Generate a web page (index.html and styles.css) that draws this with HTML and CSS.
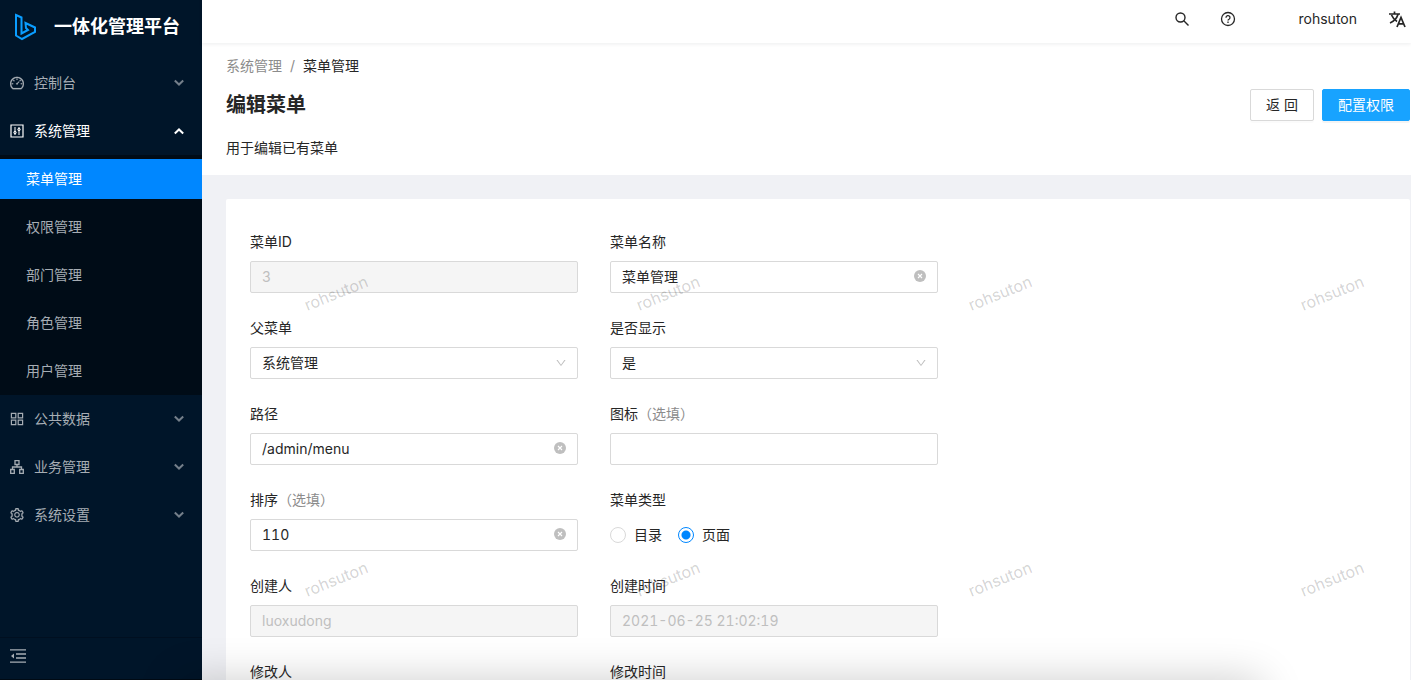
FILE: index.html
```html
<!DOCTYPE html>
<html lang="zh-CN">
<head>
<meta charset="utf-8">
<title>编辑菜单 - 一体化管理平台</title>
<link rel="stylesheet" href="styles.css">
</head>
<body>
<svg class="sprite" aria-hidden="true">
  <symbol id="down" viewBox="0 0 12 12"><path d="M1.800 3.500 6 7.500l4.200-4" fill="none" stroke="currentColor" stroke-width="2"/></symbol>
  <symbol id="select-down" viewBox="0 0 1024 1024"><path fill="currentColor" d="M884 256h-75c-5.100 0-9.900 2.500-12.900 6.600L512 654.200 227.900 262.600c-3-4.100-7.800-6.600-12.900-6.600h-75c-6.500 0-10.300 7.400-6.500 12.700l352.600 486.100c12.800 17.600 39 17.600 51.700 0l352.600-486.100c3.900-5.300.1-12.700-6.400-12.700z"/></symbol>
  <symbol id="clear" viewBox="0 0 12 12"><circle cx="6" cy="6" r="6" fill="currentColor"/><path d="M4 4l4 4M8 4 4 8" stroke="#fff" stroke-width="1.100"/></symbol>
</svg>
<div class="shell">
  <aside class="sidebar">
    <a class="brand" href="#">
      <svg class="brand-logo" viewBox="0 0 24 28" fill="none" stroke="#0a9dff" stroke-width="2"><path d="M2 2 7.500 4.500V20.500L14 17 12 15 11.500 10 21 14.500V19L8 26 2 22.500Z"/></svg>
      <span>一体化管理平台</span>
    </a>
    <nav class="menu">
      <a class="menu-item" href="#">
        <svg class="menu-icon" viewBox="64 64 896 896" fill="currentColor" stroke="currentColor" stroke-width="12"><path d="M924.800 385.600a446.700 446.700 0 00-96-142.400 446.700 446.700 0 00-142.400-96C631.100 123.800 572.500 112 512 112s-119.100 11.800-174.400 35.200a446.700 446.700 0 00-142.400 96 446.700 446.700 0 00-96 142.400C75.800 440.900 64 499.500 64 560c0 132.700 58.300 257.700 159.900 343.100l1.700 1.400c5.800 4.800 13.100 7.500 20.600 7.500h531.700c7.500 0 14.800-2.700 20.600-7.500l1.700-1.400C901.700 817.700 960 692.700 960 560c0-60.500-11.900-119.100-35.200-174.400zM761.400 836H262.600A371.120 371.120 0 01140 560c0-99.400 38.700-192.800 109-263 70.300-70.300 163.700-109 263-109 99.400 0 192.800 38.700 263 109 70.300 70.300 109 163.700 109 263 0 105.600-44.500 205.500-122.600 276zM623.500 421.500a8.030 8.030 0 00-11.300 0L527.700 506c-18.700-5-39.400-.2-54.100 14.500a55.950 55.950 0 000 79.200 55.950 55.950 0 0079.200 0 55.870 55.870 0 0014.500-54.100l84.500-84.500c3.100-3.100 3.100-8.200 0-11.300l-28.300-28.300zM490 320h44c4.400 0 8-3.600 8-8v-80c0-4.400-3.600-8-8-8h-44c-4.400 0-8 3.600-8 8v80c0 4.400 3.600 8 8 8zm260 218v44c0 4.400 3.600 8 8 8h80c4.400 0 8-3.600 8-8v-44c0-4.400-3.600-8-8-8h-80c-4.400 0-8 3.600-8 8zm12.700-197.200l-31.100-31.100a8.030 8.030 0 00-11.300 0l-56.600 56.600a8.030 8.030 0 000 11.300l31.100 31.100c3.100 3.100 8.200 3.100 11.300 0l56.600-56.600c3.100-3.100 3.100-8.200 0-11.300zm-458.600-31.100a8.030 8.030 0 00-11.300 0l-31.100 31.100a8.030 8.030 0 000 11.300l56.600 56.600c3.100 3.100 8.200 3.100 11.300 0l31.100-31.100c3.100-3.100 3.100-8.200 0-11.300l-56.600-56.600zM262 530h-80c-4.400 0-8 3.600-8 8v44c0 4.400 3.600 8 8 8h80c4.400 0 8-3.600 8-8v-44c0-4.400-3.600-8-8-8z"/></svg>
        <span>控制台</span><svg class="menu-arrow"><use href="#down"/></svg>
      </a>
      <a class="menu-item is-open" href="#">
        <svg class="menu-icon" viewBox="0 0 14 14" fill="none" stroke="currentColor"><path d="M1 1h12v12H1z" stroke-width="1.200"/><path d="M5 3v8M9 3v8"/><circle cx="5" cy="8.500" r="1.200"/><circle cx="9" cy="5.500" r="1.200"/></svg>
        <span>系统管理</span><svg class="menu-arrow"><use href="#down"/></svg>
      </a>
      <div class="submenu">
        <a class="submenu-item is-active" href="#">菜单管理</a>
        <a class="submenu-item" href="#">权限管理</a>
        <a class="submenu-item" href="#">部门管理</a>
        <a class="submenu-item" href="#">角色管理</a>
        <a class="submenu-item" href="#">用户管理</a>
      </div>
      <a class="menu-item" href="#">
        <svg class="menu-icon" viewBox="0 0 14 14" fill="none" stroke="currentColor" stroke-width="1.200"><path d="M1.400 1.400h4.400v4.400H1.400zM8.200 1.400h4.400v4.400H8.200zM1.400 8.200h4.400v4.400H1.400zM8.200 8.200h4.400v4.400H8.200z"/></svg>
        <span>公共数据</span><svg class="menu-arrow"><use href="#down"/></svg>
      </a>
      <a class="menu-item" href="#">
        <svg class="menu-icon" viewBox="0 0 14 14" fill="none" stroke="currentColor" stroke-width="1.300"><path d="M5 .7h4v3.800H5zM.7 9.500h3.600v3.800H.7zM9.700 9.500h3.600v3.800H9.700zM7 4.500V7M2.500 9.500V7h9v2.500"/></svg>
        <span>业务管理</span><svg class="menu-arrow"><use href="#down"/></svg>
      </a>
      <a class="menu-item" href="#">
        <svg class="menu-icon" viewBox="64 64 896 896" fill="currentColor" stroke="currentColor" stroke-width="12"><path d="M924.800 625.700l-65.500-56c3.100-19 4.700-38.400 4.700-57.800s-1.600-38.800-4.700-57.800l65.500-56a32.030 32.030 0 009.300-35.200l-.9-2.600a443.740 443.740 0 00-79.700-137.900l-1.800-2.100a32.120 32.120 0 00-35.100-9.500l-81.300 28.900c-30-24.600-63.500-44-99.700-57.600l-15.700-85a32.050 32.050 0 00-25.800-25.700l-2.700-.5c-52.100-9.400-106.900-9.400-159 0l-2.700.5a32.050 32.050 0 00-25.800 25.700l-15.800 85.400a351.860 351.860 0 00-99 57.400l-81.900-29.100a32 32 0 00-35.100 9.500l-1.800 2.100a446.020 446.020 0 00-79.700 137.900l-.9 2.600c-4.500 12.500-.8 26.500 9.300 35.200l66.300 56.600c-3.100 18.800-4.600 38-4.600 57.100 0 19.200 1.500 38.400 4.600 57.100L99 625.500a32.030 32.030 0 00-9.300 35.200l.9 2.600c18.100 50.400 44.900 96.900 79.700 137.900l1.800 2.100a32.120 32.120 0 0035.100 9.500l81.900-29.100c29.800 24.500 63.100 43.900 99 57.400l15.800 85.400a32.050 32.050 0 0025.800 25.700l2.700.5a449.400 449.400 0 00159 0l2.700-.5a32.050 32.050 0 0025.800-25.700l15.700-85a350 350 0 0099.700-57.600l81.300 28.900a32 32 0 0035.100-9.500l1.800-2.100c34.800-41.100 61.600-87.500 79.700-137.900l.9-2.600c4.500-12.300.8-26.300-9.300-35zM788.300 465.900c2.500 15.100 3.800 30.600 3.800 46.100s-1.300 31-3.800 46.100l-6.600 40.100 74.700 63.900a370.030 370.030 0 01-42.600 73.600L721 702.800l-31.400 25.800c-23.900 19.600-50.500 35-79.300 45.800l-38.100 14.300-17.900 97a377.500 377.500 0 01-85 0l-17.900-97.200-37.800-14.500c-28.500-10.800-55-26.200-78.700-45.700l-31.400-25.900-93.400 33.200c-17-22.900-31.200-47.600-42.600-73.600l75.500-64.500-6.500-40c-2.400-14.900-3.700-30.300-3.700-45.500 0-15.300 1.200-30.600 3.700-45.500l6.500-40-75.500-64.500c11.300-26.100 25.600-50.700 42.600-73.600l93.400 33.200 31.400-25.900c23.700-19.500 50.200-34.900 78.700-45.700l37.900-14.300 17.900-97.200c28.100-3.200 56.800-3.200 85 0l17.900 97 38.100 14.300c28.700 10.800 55.400 26.200 79.300 45.800l31.400 25.800 92.800-32.900c17 22.900 31.200 47.600 42.600 73.600L781.800 426l6.500 39.900zM512 326c-97.200 0-176 78.800-176 176s78.800 176 176 176 176-78.800 176-176-78.800-176-176-176zm79.200 255.200A111.600 111.600 0 01512 614c-29.900 0-58-11.700-79.200-32.800A111.600 111.600 0 01400 502c0-29.900 11.700-58 32.800-79.200C454 401.600 482.100 390 512 390c29.900 0 58 11.600 79.200 32.800A111.600 111.600 0 01624 502c0 29.900-11.700 58-32.800 79.200z"/></svg>
        <span>系统设置</span><svg class="menu-arrow"><use href="#down"/></svg>
      </a>
    </nav>
    <button class="collapse" type="button" aria-label="收起菜单">
      <svg viewBox="0 0 16 16" fill="none" stroke="currentColor" stroke-width="1.300"><path d="M0 1.800h16M6 6h10M6 10h10M0 14.200h16"/><path d="M1 8l3-2.500v5z" fill="currentColor" stroke="none"/></svg>
    </button>
  </aside>

  <div class="main">
    <header class="topbar">
      <button class="top-action" type="button" aria-label="搜索"><svg viewBox="0 0 16 16" fill="none" stroke="currentColor" stroke-width="1.400"><circle cx="6.500" cy="6.500" r="4.500"/><path d="M9.800 9.800 14.500 14.500"/></svg></button>
      <a class="top-action" href="#" aria-label="帮助"><svg viewBox="0 0 16 16" fill="none" stroke="currentColor" stroke-width="1.300"><circle cx="8" cy="8" r="6.500"/><path d="M6 6.700a2 2 0 1 1 3 1.600q-1 .5-1 1.300"/><path d="M8 10.600v1.300"/></svg></a>
      <a class="user" href="#">rohsuton</a>
      <button class="lang" type="button" aria-label="语言"><svg viewBox="0 0 18 18" fill="none" stroke="currentColor" stroke-width="1.700"><path d="M1 4h11M6.500 1.500V4M10 4.500Q8 10.500 2 13M3.500 5Q5.500 9.500 9 11.500"/><path d="M9 17 13 7.500 17 17M10.500 13.800h5"/></svg></button>
    </header>

    <div class="page">
      <section class="page-header">
        <nav class="crumbs"><a href="#">系统管理</a><span class="slash">/</span><span class="current">菜单管理</span></nav>
        <div class="heading">
          <h1>编辑菜单</h1>
          <div class="actions"><button class="btn" type="button">返 回</button><button class="btn btn-primary" type="button">配置权限</button></div>
        </div>
        <p class="desc">用于编辑已有菜单</p>
      </section>

      <div class="content">
        <form class="card">
          <div class="field"><label for="id">菜单ID</label><input class="control" id="id" value="3" disabled></div>
          <div class="field"><label for="name">菜单名称</label><div class="control-wrap"><input class="control" id="name" value="菜单管理"><button class="clear" type="button" aria-label="清除"><svg><use href="#clear"/></svg></button></div></div>
          <div class="field"><label for="parent">父菜单</label><div class="control-wrap"><select class="control" id="parent"><option>系统管理</option></select><svg class="select-arrow"><use href="#select-down"/></svg></div></div>
          <div class="field"><label for="show">是否显示</label><div class="control-wrap"><select class="control" id="show"><option>是</option></select><svg class="select-arrow"><use href="#select-down"/></svg></div></div>
          <div class="field"><label for="path">路径</label><div class="control-wrap"><input class="control" id="path" value="/admin/menu"><button class="clear" type="button" aria-label="清除"><svg><use href="#clear"/></svg></button></div></div>
          <div class="field"><label for="icon">图标<span class="optional">（选填）</span></label><input class="control" id="icon"></div>
          <div class="field"><label for="sort">排序<span class="optional">（选填）</span></label><div class="control-wrap"><input class="control tabular" id="sort" value="110"><button class="clear" type="button" aria-label="清除"><svg><use href="#clear"/></svg></button></div></div>
          <fieldset class="field"><legend>菜单类型</legend>
            <div class="radios"><label><input type="radio" name="type"><span>目录</span></label><label><input type="radio" name="type" checked><span>页面</span></label></div>
          </fieldset>
          <div class="field"><label for="creator">创建人</label><input class="control" id="creator" value="luoxudong" disabled></div>
          <div class="field"><label for="created">创建时间</label><input class="control tabular" id="created" value="2021-06-25 21:02:19" disabled></div>
          <div class="field"><label for="editor">修改人</label><input class="control" id="editor" disabled></div>
          <div class="field"><label for="edited">修改时间</label><input class="control" id="edited" disabled></div>
        </form>
        <div class="watermark" aria-hidden="true"><span>rohsuton</span><span>rohsuton</span><span>rohsuton</span><span>rohsuton</span><span>rohsuton</span><span>rohsuton</span><span>rohsuton</span><span>rohsuton</span></div>
      </div>
    </div>
  </div>
</div>
<div class="bottom-shade"></div>
</body>
</html>
```
FILE: styles.css
```css
* { box-sizing: border-box; }
body {
  margin: 0;
  overflow: hidden;
  font: 14px/22px Inter, "Noto Sans CJK SC", sans-serif;
  color: #262626;
  background: #f0f1f5;
}
a { color: inherit; text-decoration: none; }
button, input, select { font: inherit; color: inherit; }
button { padding: 0; border: 0; background: none; cursor: pointer; }
svg { display: block; }
.sprite { position: absolute; width: 0; height: 0; }

.shell { display: grid; grid-template-columns: 202px minmax(0, 1fr); height: 100vh; }

.sidebar { display: flex; flex-direction: column; color: #a6adb4; background: #001529; }
.brand { display: flex; align-items: center; gap: 16px; height: 54px; padding: 0 14px; color: #fff; font-size: 18px; font-weight: 600; }
.brand-logo { width: 24px; height: 28px; }
.menu { flex: 1; padding-top: 5px; }
.menu-item { display: flex; align-items: center; gap: 10px; height: 40px; margin: 4px 0 8px; padding: 0 17px 0 10px; }
.menu-item.is-open { margin-bottom: 4px; color: #fff; }
.submenu + .menu-item { margin-top: 4px; }
.menu-icon { width: 14px; height: 14px; }
.menu-arrow { width: 12px; height: 12px; margin-left: auto; opacity: .7; }
.is-open .menu-arrow { transform: rotate(180deg); opacity: 1; }
.submenu { padding: 4px 0; background: #000c17; display: grid; gap: 8px; }
.submenu-item { height: 40px; padding-left: 26px; line-height: 40px; }
.submenu-item.is-active { color: #fff; background: #0087ff; }
.collapse { height: 43px; padding: 0 10px 5px; border-top: 1px solid #000f20; border-bottom: 1px solid #000a14; color: #a6adb4; }
.collapse svg { width: 16px; height: 16px; }

.main { display: flex; flex-direction: column; min-height: 0; }
.topbar { position: relative; z-index: 1; display: flex; flex: none; align-items: center; justify-content: flex-end; height: 43px; padding: 0 5px 5px 0; background: #fff; box-shadow: 0 1px 4px rgba(0, 21, 41, .08); }
.top-action { padding: 0 15px; }
.top-action svg { width: 16px; height: 16px; }
.user { margin-left: 48px; }
.lang { margin-left: 31px; }
.lang svg { width: 18px; height: 18px; }

.page { flex: 1; min-height: 0; overflow: auto; scrollbar-width: none; }
.page-header { padding: 12px 1px 16px 24px; background: #fff; }
.crumbs { color: #8c8c8c; }
.slash { margin: 0 8px; }
.current { color: #262626; }
.heading { display: flex; align-items: center; justify-content: space-between; height: 32px; margin-top: 12px; }
h1 { margin: 0; font-size: 20px; line-height: 32px; font-weight: 600; }
.actions { display: flex; gap: 8px; }
.btn { height: 32px; padding: 0 15px; border: 1px solid #d9d9d9; border-radius: 2px; background: #fff; box-shadow: 0 2px 0 rgba(0, 0, 0, .016); }
.btn-primary { color: #fff; border-color: #18a3ff; background: #18a3ff; box-shadow: 0 2px 0 rgba(0, 0, 0, .045); }
.desc { margin: 16px 0 0; }

.content { position: relative; padding: 24px 1px 24px 24px; overflow: hidden; }
.card { display: grid; grid-template-columns: 328px 328px; gap: 24px 32px; padding: 32px 24px; border-radius: 2px; background: #fff; }
.field { display: grid; gap: 8px; min-width: 0; margin: 0; padding: 0; border: 0; align-content: start; }
legend { padding: 0; margin-bottom: 8px; }
.optional { color: #8c8c8c; }
.control-wrap { position: relative; }
.control { display: block; width: 100%; height: 32px; padding: 0 11px; border: 1px solid #d9d9d9; border-radius: 2px; background: #fff; outline: 0; appearance: none; }
input.control { padding-bottom: 2px; }
.control:disabled { color: #bfbfbf; background: #f5f5f5; opacity: 1; }
.tabular { font-feature-settings: "tnum"; }
.clear, .select-arrow { position: absolute; top: 9px; right: 12px; width: 12px; height: 12px; color: #bfbfbf; }
.clear svg { width: 12px; height: 12px; }
.select-arrow { top: 10px; right: 11px; pointer-events: none; }
.radios { display: flex; gap: 16px; height: 32px; align-items: center; }
.radios label { display: flex; align-items: center; gap: 8px; }
.radios input { width: 16px; height: 16px; margin: 0; border: 1px solid #d9d9d9; border-radius: 50%; background: #fff; appearance: none; }
.radios input:checked { border-color: #0087ff; background: radial-gradient(circle, #0087ff 4px, #fff 5px); }

.watermark { position: absolute; inset: 0; display: grid; grid-template-columns: repeat(4, 332px); grid-auto-rows: 286px; padding: 106px 0 0 100px; overflow: hidden; pointer-events: none; color: rgba(0, 0, 0, .18); font-size: 16px; line-height: 24px; }
.watermark span { width: 68px; height: 24px; text-align: center; transform: rotate(-22deg); }

.bottom-shade { position: fixed; top: 100%; left: 180px; right: 150px; height: 60px; box-shadow: 0 0 44px rgba(0, 0, 0, .2); pointer-events: none; }
```
